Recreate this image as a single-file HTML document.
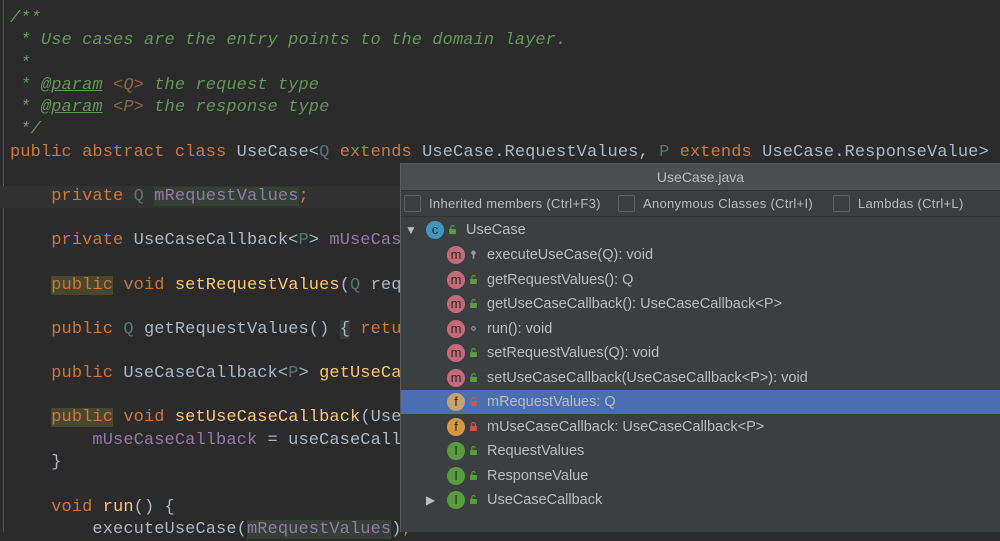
<!DOCTYPE html>
<html><head><meta charset="utf-8"><style>
*{margin:0;padding:0;box-sizing:border-box}
body{width:1000px;height:532px;overflow:hidden;background:#2b2b2b;position:relative;font-family:"Liberation Mono",monospace}
.l{position:absolute;left:10px;height:22px;line-height:22px;font-size:17px;letter-spacing:0.1px;white-space:pre;color:#a9b7c6;margin-top:3px}
.k{color:#cc7832}.c{color:#629755;font-style:italic}.t{color:#507874}.f{color:#9876aa}.m{color:#ffc66d}
.ct{color:#8a653b;font-style:italic}.u{text-decoration:underline}
.hl{background:#4a4730}
.gut{position:absolute;left:3px;top:0;width:1px;height:532px;background:#555}
#pop{position:absolute;left:400px;top:163px;width:600px;height:369px;background:#3c3f41;border-left:1px solid #5a5d5f;border-top:1px solid #555;font-family:"Liberation Sans",sans-serif;color:#bbbbbb}
.title{height:27px;background:#4b4e50;text-align:center;line-height:27px;font-size:14px;color:#bbb;border-bottom:1px solid #323232}
.cbrow{height:26px;border-bottom:1px solid #323232;position:relative;font-size:13px}
.cb{position:absolute;top:4px;width:17px;height:17px;border:1px solid #5e6060;background:#3c3f41;border-radius:2px}
.cbl{position:absolute;top:5px;letter-spacing:0.3px}
.row{position:absolute;left:0;width:600px;height:24px;font-size:14.5px;line-height:24px;margin-top:1px}
.ic{position:absolute;top:3px;width:18px;height:18px;border-radius:50%;color:#2b2b2b;font-size:13px;line-height:17px;text-align:center}
.lk{position:absolute;top:7px;width:9px;height:9px}
.tx{position:absolute;left:86px}
</style></head><body>
<div class="gut"></div>
<div style="position:absolute;left:0;top:186px;width:1000px;height:22px;background:#323232"></div>
<div class="l c" style="top:5px">/**</div>
<div class="l c" style="top:27px"> * Use cases are the entry points to the domain layer.</div>
<div class="l c" style="top:50px"> *</div>
<div class="l c" style="top:72px"> * <span class="u">@param</span> <span class="ct">&lt;Q&gt;</span> the request type</div>
<div class="l c" style="top:94px"> * <span class="u">@param</span> <span class="ct">&lt;P&gt;</span> the response type</div>
<div class="l c" style="top:116px"> */</div>
<div class="l" style="top:139px"><span class="k">public abstract class </span>UseCase&lt;<span class="t">Q</span> <span class="k">extends</span> UseCase.RequestValues, <span class="t">P</span> <span class="k">extends</span> UseCase.ResponseValue&gt; {</div>
<div class="l" style="top:183px">    <span class="k">private</span> <span class="t">Q</span> <span class="f" style="background:#344134">mRequestValues</span><span class="k">;</span></div>
<div class="l" style="top:227px">    <span class="k">private</span> UseCaseCallback&lt;<span class="t">P</span>&gt; <span class="f">mUseCaseCallback</span><span class="k">;</span></div>
<div class="l" style="top:272px">    <span class="k hl">public</span> <span class="k">void</span> <span class="m">setRequestValues</span>(<span class="t">Q</span> requestValues)</div>
<div class="l" style="top:316px">    <span class="k">public</span> <span class="t">Q</span> <span class="m" style="color:#a9b7c6">getRequestValues</span>() <span style="background:#3b3b3b">{</span> <span class="k">return</span></div>
<div class="l" style="top:360px">    <span class="k">public</span> UseCaseCallback&lt;<span class="t">P</span>&gt; <span class="m">getUseCaseCallback</span>()</div>
<div class="l" style="top:404px">    <span class="k hl">public</span> <span class="k">void</span> <span class="m">setUseCaseCallback</span>(UseCaseCallback&lt;P&gt;</div>
<div class="l" style="top:427px">        <span class="f">mUseCaseCallback</span> = useCaseCallback<span class="k">;</span></div>
<div class="l" style="top:449px">    }</div>
<div class="l" style="top:494px">    <span class="k">void</span> <span class="m">run</span>() {</div>
<div class="l" style="top:516px">        executeUseCase(<span class="f" style="background:#344134">mRequestValues</span>)<span class="k">;</span></div>

<div id="pop">
<div class="title">UseCase.java</div>
<div class="cbrow">
<div class="cb" style="left:3px"></div><div class="cbl" style="left:28px">Inherited members (Ctrl+F3)</div>
<div class="cb" style="left:217px"></div><div class="cbl" style="left:242px">Anonymous Classes (Ctrl+I)</div>
<div class="cb" style="left:432px"></div><div class="cbl" style="left:457px">Lambdas (Ctrl+L)</div>
</div>
<div class="row" style="top:53px"><span style="position:absolute;left:4px;font-size:12px">▼</span><div class="ic" style="left:25px;background:#3e97bf">c</div><svg class="lk" style="left:47px" viewBox="0 0 8 8"><rect x="1" y="3.5" width="6" height="4.5" fill="#5a9d3c"/><path d="M2.5 3.5V2a1.5 1.5 0 0 1 3 0" stroke="#5a9d3c" fill="none"/></svg><span class="tx" style="left:65px">UseCase</span></div>

<div class="row" style="top:78px"><div class="ic" style="left:46px;background:#c56a78">m</div><svg class="lk" style="left:68px" viewBox="0 0 8 8"><circle cx="4" cy="2.5" r="2" fill="#999"/><rect x="3.3" y="4" width="1.4" height="4" fill="#999"/></svg><span class="tx">executeUseCase(Q): void</span></div>
<div class="row" style="top:103px"><div class="ic" style="left:46px;background:#c56a78">m</div><svg class="lk" style="left:68px" viewBox="0 0 8 8"><rect x="1" y="3.5" width="6" height="4.5" fill="#5a9d3c"/><path d="M2.5 3.5V2a1.5 1.5 0 0 1 3 0" stroke="#5a9d3c" fill="none"/></svg><span class="tx">getRequestValues(): Q</span></div>
<div class="row" style="top:127px"><div class="ic" style="left:46px;background:#c56a78">m</div><svg class="lk" style="left:68px" viewBox="0 0 8 8"><rect x="1" y="3.5" width="6" height="4.5" fill="#5a9d3c"/><path d="M2.5 3.5V2a1.5 1.5 0 0 1 3 0" stroke="#5a9d3c" fill="none"/></svg><span class="tx">getUseCaseCallback(): UseCaseCallback&lt;P&gt;</span></div>
<div class="row" style="top:152px"><div class="ic" style="left:46px;background:#c56a78">m</div><svg class="lk" style="left:68px" viewBox="0 0 8 8"><circle cx="4" cy="4" r="1.6" fill="none" stroke="#999"/></svg><span class="tx">run(): void</span></div>
<div class="row" style="top:176px"><div class="ic" style="left:46px;background:#c56a78">m</div><svg class="lk" style="left:68px" viewBox="0 0 8 8"><rect x="1" y="3.5" width="6" height="4.5" fill="#5a9d3c"/><path d="M2.5 3.5V2a1.5 1.5 0 0 1 3 0" stroke="#5a9d3c" fill="none"/></svg><span class="tx">setRequestValues(Q): void</span></div>
<div class="row" style="top:201px"><div class="ic" style="left:46px;background:#c56a78">m</div><svg class="lk" style="left:68px" viewBox="0 0 8 8"><rect x="1" y="3.5" width="6" height="4.5" fill="#5a9d3c"/><path d="M2.5 3.5V2a1.5 1.5 0 0 1 3 0" stroke="#5a9d3c" fill="none"/></svg><span class="tx">setUseCaseCallback(UseCaseCallback&lt;P&gt;): void</span></div>
<div class="row" style="top:225px;background:#4b6eaf"><div class="ic" style="left:46px;background:#c7a26a">f</div><svg class="lk" style="left:68px" viewBox="0 0 8 8"><rect x="1" y="3.5" width="6" height="4.5" fill="#c9573f"/><path d="M2.3 3.5V2.2a1.7 1.7 0 0 1 3.4 0V3.5" stroke="#c9573f" fill="none"/></svg><span class="tx">mRequestValues: Q</span></div>
<div class="row" style="top:250px"><div class="ic" style="left:46px;background:#d19a3f">f</div><svg class="lk" style="left:68px" viewBox="0 0 8 8"><rect x="1" y="3.5" width="6" height="4.5" fill="#c9573f"/><path d="M2.3 3.5V2.2a1.7 1.7 0 0 1 3.4 0V3.5" stroke="#c9573f" fill="none"/></svg><span class="tx">mUseCaseCallback: UseCaseCallback&lt;P&gt;</span></div>
<div class="row" style="top:274px"><div class="ic" style="left:46px;background:#5a9d3c">I</div><svg class="lk" style="left:68px" viewBox="0 0 8 8"><rect x="1" y="3.5" width="6" height="4.5" fill="#5a9d3c"/><path d="M2.5 3.5V2a1.5 1.5 0 0 1 3 0" stroke="#5a9d3c" fill="none"/></svg><span class="tx">RequestValues</span></div>
<div class="row" style="top:299px"><div class="ic" style="left:46px;background:#5a9d3c">I</div><svg class="lk" style="left:68px" viewBox="0 0 8 8"><rect x="1" y="3.5" width="6" height="4.5" fill="#5a9d3c"/><path d="M2.5 3.5V2a1.5 1.5 0 0 1 3 0" stroke="#5a9d3c" fill="none"/></svg><span class="tx">ResponseValue</span></div>
<div class="row" style="top:323px"><span style="position:absolute;left:25px;font-size:12px">▶</span><div class="ic" style="left:46px;background:#5a9d3c">I</div><svg class="lk" style="left:68px" viewBox="0 0 8 8"><rect x="1" y="3.5" width="6" height="4.5" fill="#5a9d3c"/><path d="M2.5 3.5V2a1.5 1.5 0 0 1 3 0" stroke="#5a9d3c" fill="none"/></svg><span class="tx">UseCaseCallback</span></div>
</div>
</body></html>
